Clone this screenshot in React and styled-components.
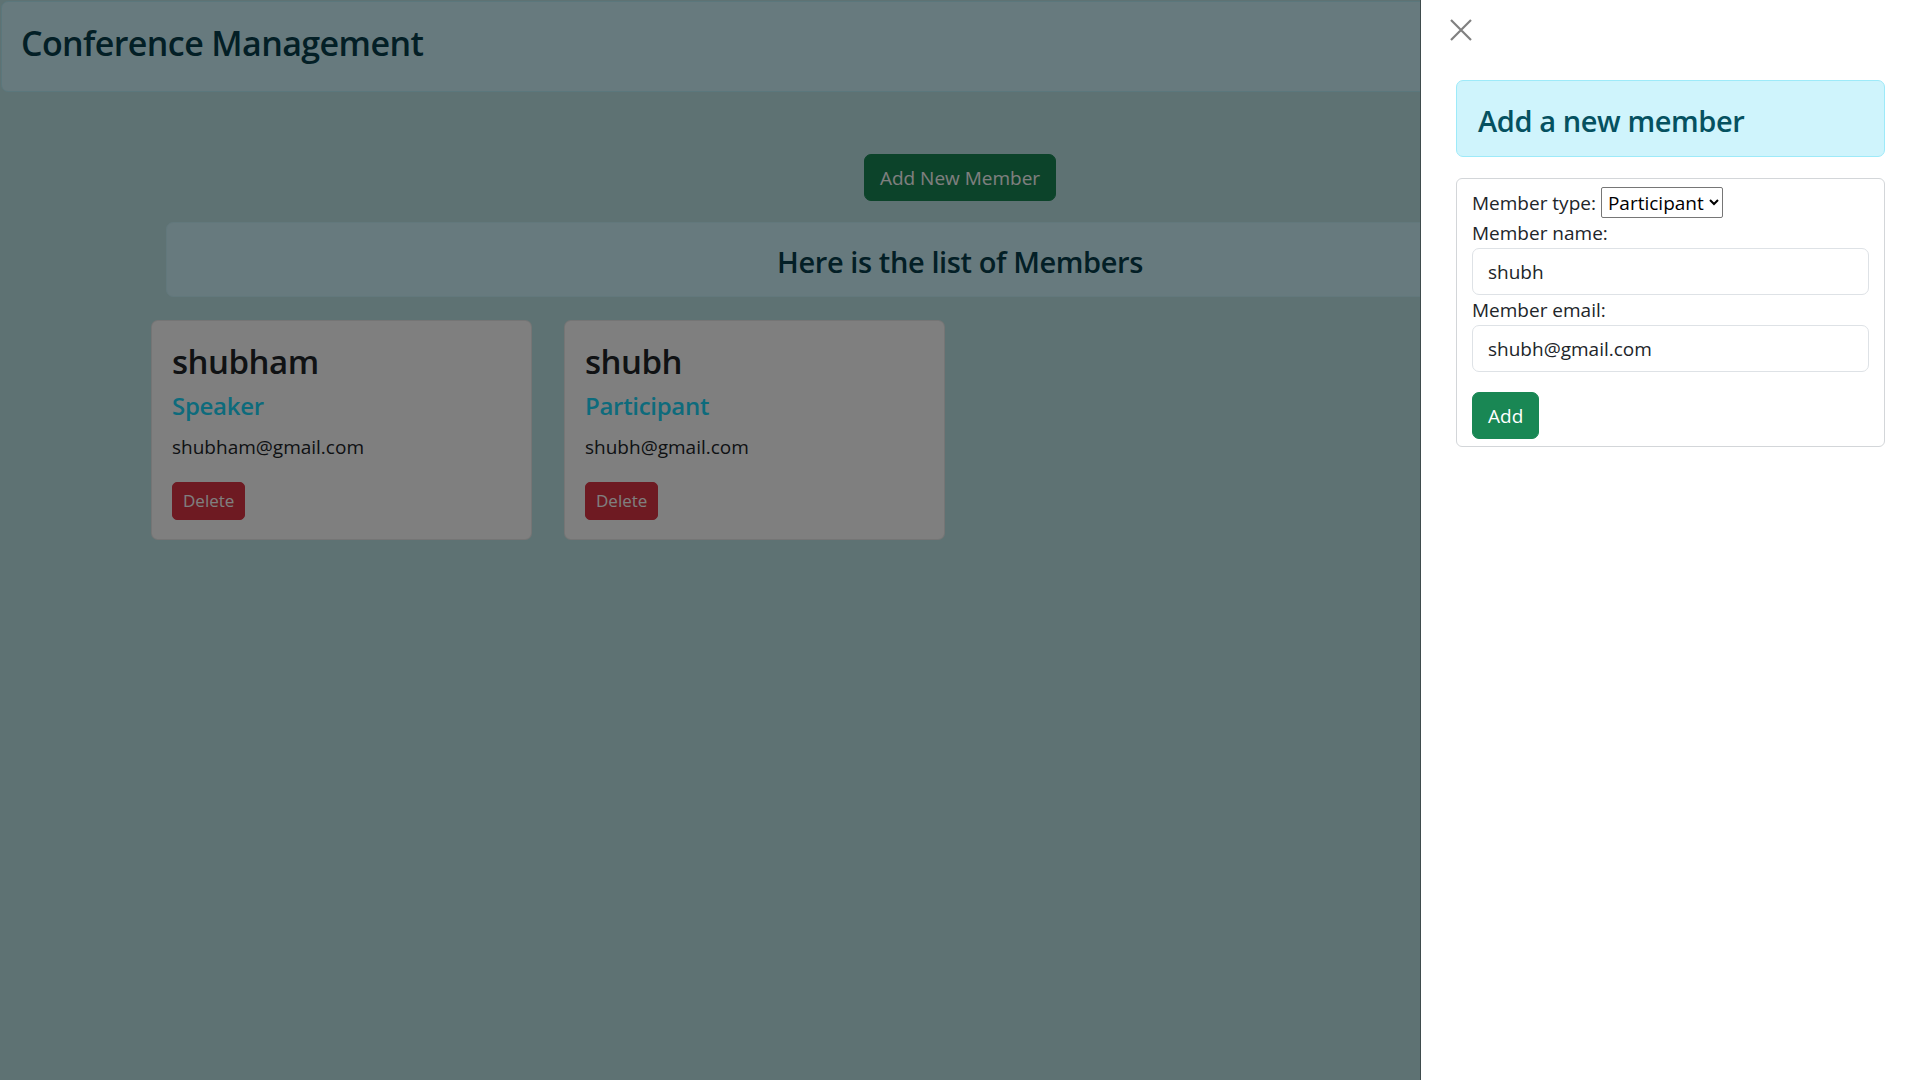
import styled, { createGlobalStyle } from 'styled-components';

const GlobalStyle = createGlobalStyle`
  * { box-sizing: border-box; }
  body {
    margin: 0;
    background: #bce4e6;
    font-family: "Open Sans", "Noto Sans", sans-serif;
    color: #212529;
    font-size: 20px;
    line-height: 1.5;
  }
`;

const members = [
  { name: 'shubham', type: 'Speaker', email: 'shubham@gmail.com' },
  { name: 'shubh', type: 'Participant', email: 'shubh@gmail.com' },
];

const App = () => {
  return (
    <>
      <GlobalStyle />
      <Header>
        <Title>Conference Management</Title>
      </Header>
      <Toolbar>
        <Button>Add New Member</Button>
      </Toolbar>
      <ListHeading>
        <h3>Here is the list of Members</h3>
      </ListHeading>
      <Cards>
        {members.map((m) => (
          <Card key={m.email}>
            <CardTitle>{m.name}</CardTitle>
            <CardSubtitle>{m.type}</CardSubtitle>
            <CardText>{m.email}</CardText>
            <SmallButton>Delete</SmallButton>
          </Card>
        ))}
      </Cards>

      <Backdrop />
      <Offcanvas>
        <OffcanvasHeader>
          <CloseBtn aria-label="Close">
            <svg width="22" height="22" viewBox="0 0 22 22">
              <path d="M1 1 L21 21 M21 1 L1 21" stroke="#808080" strokeWidth="2.2" fill="none" />
            </svg>
          </CloseBtn>
        </OffcanvasHeader>
        <OffcanvasBody>
          <FormHeading>
            <h3>Add a new member</h3>
          </FormHeading>
          <FormCard>
            <TypeRow>
              <Label>Member type:</Label>
              <Select defaultValue="Participant">
                <option>Speaker</option>
                <option>Participant</option>
              </Select>
            </TypeRow>
            <Label>Member name:</Label>
            <Input defaultValue="shubh" />
            <Label>Member email:</Label>
            <Input defaultValue="shubh@gmail.com" />
            <SubmitButton>Add</SubmitButton>
          </FormCard>
        </OffcanvasBody>
      </Offcanvas>
    </>
  );
};

export default App;

const Header = styled.div`
  margin: 1px 0 0 1px;
  padding: 20px 19px 0;
  height: 91px;
  background: #cff4fc;
  border: 1px solid #b6eef8;
  border-radius: 7px;
`;

const Title = styled.h2`
  margin: 0;
  font-size: 34px;
  font-weight: 600;
  letter-spacing: -0.6px;
  color: #063f4c;
  line-height: 42px;
`;

const Toolbar = styled.div`
  display: flex;
  justify-content: center;
  padding: 62px 0 21px;
`;

const Button = styled.button`
  font-family: inherit;
  font-size: 19px;
  line-height: 30px;
  padding: 7.5px 15px;
  border: 1px solid #198754;
  border-radius: 7px;
  background: #198754;
  color: #fff;
  cursor: pointer;
  align-self: flex-start;
`;

const SubmitButton = styled(Button)`
  margin-top: 20px;
`;

const SmallButton = styled.button`
  font-family: inherit;
  font-size: 17px;
  line-height: 26px;
  padding: 5px 10px;
  border: 1px solid #dc3545;
  border-radius: 5px;
  background: #dc3545;
  color: #fff;
  align-self: flex-start;
`;

const ListHeading = styled.div`
  margin: 0 166px;
  height: 75px;
  padding-top: 5px;
  background: #cff4fc;
  border: 1px solid #c4f0f8;
  border-radius: 7px;
  display: flex;
  align-items: center;
  justify-content: center;

  h3 {
    margin: 0;
    font-size: 29px;
    font-weight: 600;
    letter-spacing: -0.4px;
    line-height: 1.2;
    color: #063f4c;
  }
`;

const Cards = styled.div`
  display: flex;
  gap: 32px;
  padding: 23px 0 0 151px;
`;

const Card = styled.div`
  width: 381px;
  height: 220px;
  background: #fff;
  border: 1px solid rgba(0, 0, 0, 0.08);
  border-radius: 7px;
  padding: 18px 20px 20px;
  display: flex;
  flex-direction: column;
`;

const CardTitle = styled.h2`
  margin: 0 0 3px;
  font-size: 33px;
  font-weight: 600;
  letter-spacing: -0.5px;
  line-height: 46px;
  color: #212529;
`;

const CardSubtitle = styled.h4`
  margin: 0 0 8px;
  font-size: 24px;
  font-weight: 600;
  letter-spacing: -0.3px;
  line-height: 36px;
  color: #1ad6f8;
`;

const CardText = styled.p`
  margin: 0 0 20px;
  font-size: 19px;
  line-height: 30px;
`;

const Backdrop = styled.div`
  position: fixed;
  inset: 0;
  background: rgba(0, 0, 0, 0.5);
`;

const Offcanvas = styled.div`
  position: fixed;
  top: 0;
  right: 0;
  bottom: 0;
  width: 500px;
  background: #fff;
  border-left: 1px solid #3f4c4d;
  display: flex;
  flex-direction: column;
`;

const OffcanvasHeader = styled.div`
  height: 80px;
  padding: 19px 0 0 29px;
`;

const CloseBtn = styled.button`
  border: 0;
  background: transparent;
  padding: 0;
  width: 22px;
  height: 22px;
  display: flex;
  cursor: pointer;
`;

const OffcanvasBody = styled.div`
  padding: 0 35px;
  display: flex;
  flex-direction: column;
`;

const FormHeading = styled.div`
  height: 77px;
  background: #cff4fc;
  border: 1px solid #9eeaf9;
  border-radius: 7px;
  padding: 5px 21px 0;
  display: flex;
  align-items: center;
  margin-bottom: 21px;

  h3 {
    margin: 0;
    font-size: 29px;
    font-weight: 600;
    letter-spacing: -0.4px;
    line-height: 1.2;
    color: #055160;
  }
`;

const FormCard = styled.div`
  border: 1px solid #d3d6d9;
  border-radius: 6px;
  padding: 8px 15px 7px;
  display: flex;
  flex-direction: column;
`;

const TypeRow = styled.div`
  display: flex;
  align-items: center;
  gap: 5px;
  height: 31px;
`;

const Label = styled.label`
  font-size: 19px;
  line-height: 30px;
  color: #212529;
`;

const Select = styled.select`
  font-family: inherit;
  font-size: 19px;
  height: 31px;
  padding: 0 2px;
  border: 1px solid #767676;
  border-radius: 2px;
  background: #fff;
  color: #000;
`;

const Input = styled.input`
  font-family: inherit;
  font-size: 19px;
  line-height: 30px;
  height: 47px;
  padding: 7.5px 15px;
  border: 1px solid #dee2e6;
  border-radius: 7px;
  color: #212529;
  width: 100%;
`;
